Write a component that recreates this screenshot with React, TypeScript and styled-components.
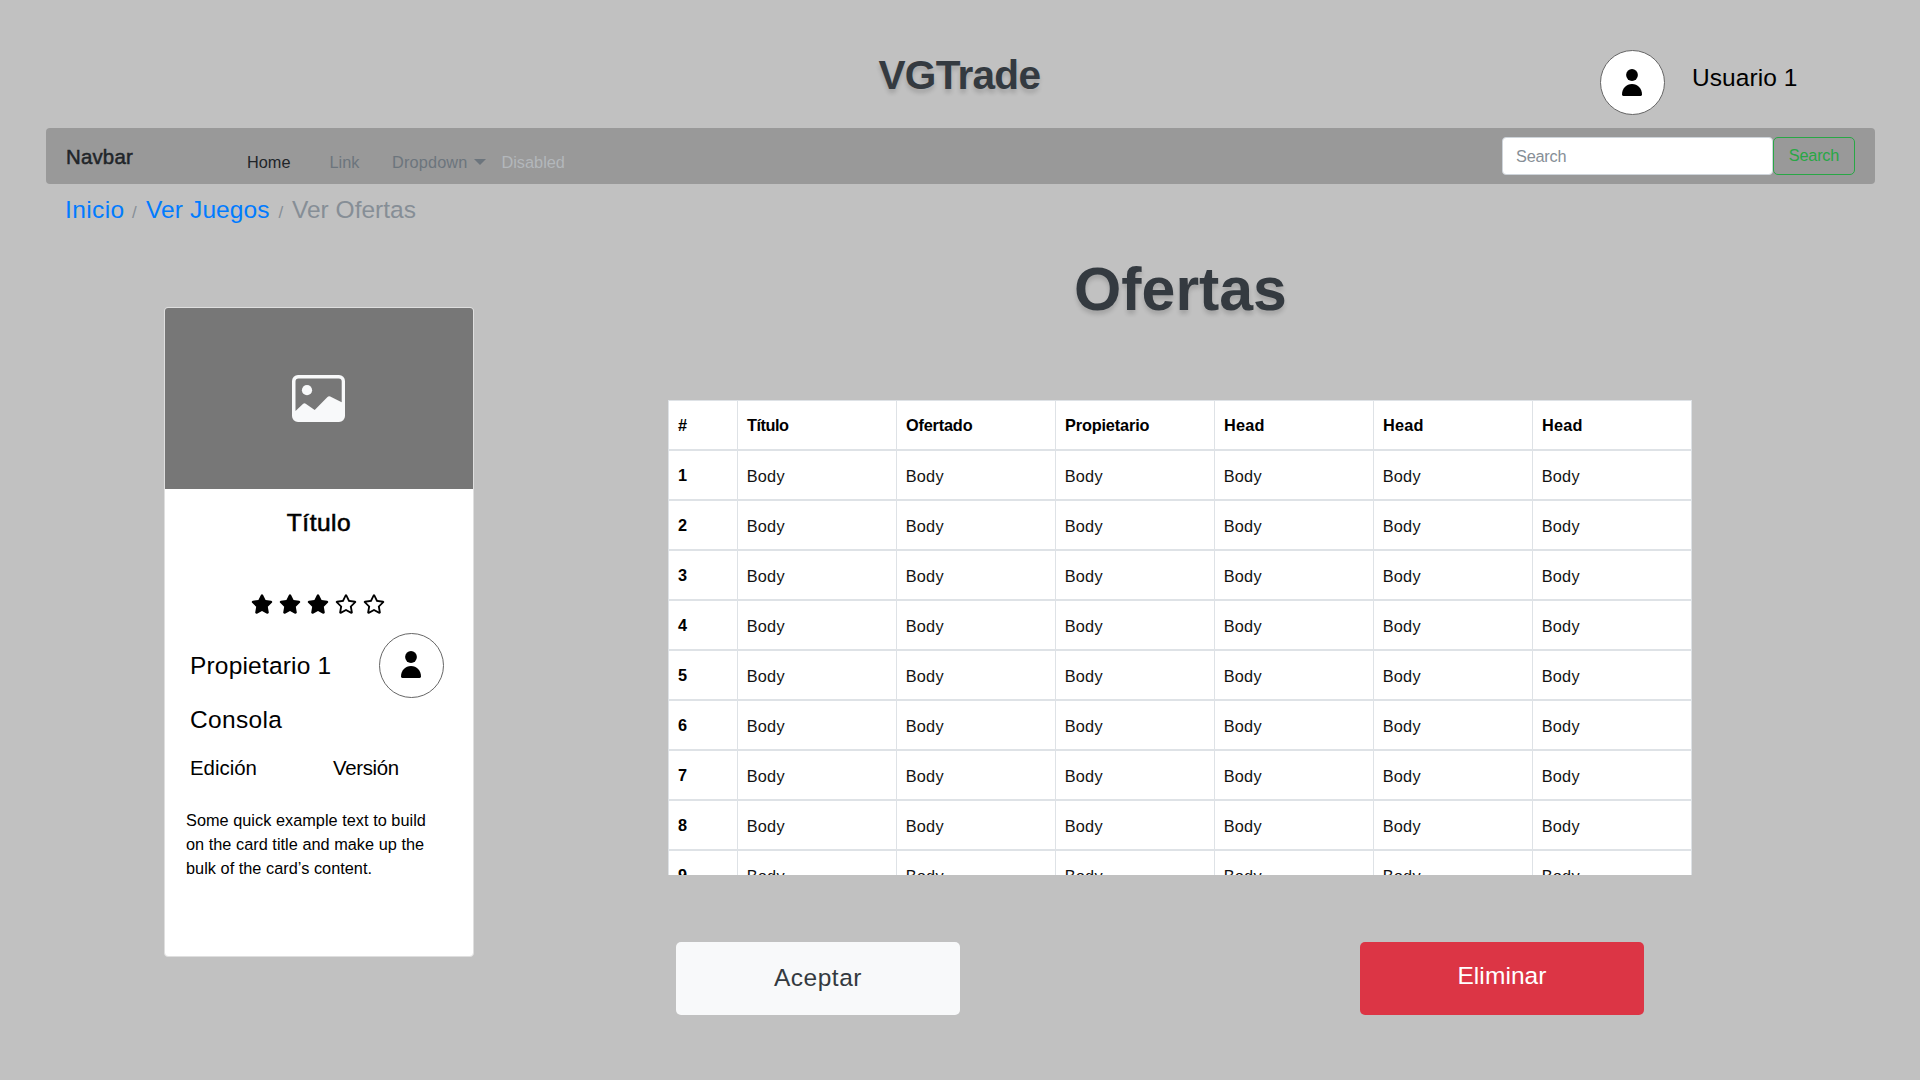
import React from "react";
import styled, { createGlobalStyle } from "styled-components";
import { FaStar, FaRegStar } from "react-icons/fa";

const GlobalStyle = createGlobalStyle`
  *, *::before, *::after { box-sizing: border-box; }
  html, body { margin: 0; padding: 0; }
  body {
    background: #c1c1c1;
    color: #000;
    font-family: "Liberation Sans", Arial, sans-serif;
    font-size: 16.3px;
    line-height: 24px;
  }
  h1, h2, h3, p { margin: 0; }
`;

const Page = styled.div`
  width: 1920px;
  height: 1080px;
  overflow: hidden;
  background: #c1c1c1;
`;

const Header = styled.header`
  display: grid;
  grid-template-columns: 878.5px 721.5px 1fr;
  height: 128px;
`;

const SiteTitle = styled.h1`
  grid-column: 2;
  padding-top: 51px;
  color: #343a40;
  font-size: 40.6px;
  line-height: 48px;
  font-weight: 700;
  letter-spacing: -0.74px;
  text-shadow: 0 4px 4px rgba(0, 0, 0, 0.15);
`;

const UserBlock = styled.div`
  display: flex;
  align-items: flex-start;
  gap: 27px;
  padding-top: 50px;
`;

const LargeText = styled.span<{ $spacing?: number }>`
  font-size: 24.5px;
  line-height: 30px;
  letter-spacing: ${(p) => p.$spacing ?? 0}px;
`;

const UserName = styled(LargeText)`
  padding-top: 12.5px;
`;

const Avatar = styled.div<{ $lift?: number }>`
  display: flex;
  align-items: center;
  justify-content: center;
  flex: none;
  width: 65px;
  height: 65px;
  padding: 0 1px ${(p) => p.$lift ?? 0}px 0;
  border: 1px solid #666;
  border-radius: 50%;
  background: #fff;
`;

const Navbar = styled.nav`
  display: flex;
  align-items: flex-start;
  height: 56px;
  margin: 0 45px 0 46px;
  padding: 0 20px 0 20px;
  border-radius: 4px;
  background: #999;
`;

const Brand = styled.span`
  width: 181px;
  padding-top: 17px;
  color: #212529;
  font-size: 20.4px;
  letter-spacing: 0.2px;
  -webkit-text-stroke: 0.5px #212529;
`;

const NavList = styled.div`
  display: grid;
  grid-template-columns: 82.5px 62.5px 109.5px auto;
  flex: 1;
  padding-top: 22px;
`;

const NavLink = styled.a<{ $tone: string }>`
  display: flex;
  align-items: flex-start;
  gap: 6px;
  color: ${(p) => p.$tone};
`;

const DropLabel = styled.span`
  letter-spacing: 0.16px;
`;

const Caret = styled.span`
  margin-top: 9px;
  border: 6px solid transparent;
  border-top-color: currentColor;
  border-bottom: 0;
`;

const SearchForm = styled.div`
  display: flex;
  padding-top: 9px;
  letter-spacing: -0.22px;
`;

const SearchField = styled.div`
  width: 271px;
  height: 38px;
  padding: 6px 13px;
  border: 1px solid #ced4da;
  border-radius: 4px;
  background: #fff;
  color: #868e96;
`;

const SearchButton = styled.div`
  width: 82px;
  height: 38px;
  padding-top: 5px;
  border: 1px solid #28a745;
  border-radius: 5px;
  color: #28a745;
  text-align: center;
`;

const Breadcrumb = styled.div`
  display: grid;
  grid-template-columns: 67px 14px 132.5px 13.5px auto;
  align-items: baseline;
  height: 50px;
  padding: 7.5px 0 0 65px;
`;

const Crumb = styled(LargeText)<{ $current?: boolean }>`
  line-height: 36px;
  color: ${(p) => (p.$current ? "#868e96" : "#007bff")};
`;

const Slash = styled.span`
  color: #868e96;
  font-size: 17px;
`;

const Main = styled.main`
  display: flex;
  align-items: flex-start;
  gap: 194px;
  padding-left: 164px;
`;

const Card = styled.section`
  width: 310px;
  height: 650px;
  margin-top: 73px;
  border: 1px solid #dfdfdf;
  border-radius: 4px;
  background: #fff;
  overflow: hidden;
`;

const CardImage = styled.div`
  display: flex;
  align-items: center;
  justify-content: center;
  height: 181px;
  padding-right: 2px;
  background: #777;
`;

const CardTitle = styled.h3`
  padding-top: 19px;
  font-size: 24.5px;
  line-height: 30px;
  font-weight: 400;
  letter-spacing: 0.5px;
  text-align: center;
  -webkit-text-stroke: 0.6px #000;
`;

const Rating = styled.div`
  display: flex;
  justify-content: center;
  gap: 6px;
  margin: 56px 0 19px;
  padding-right: 3px;

  svg {
    display: block;
    width: 22px;
    height: 20px;
  }
`;

const CardBody = styled.div`
  padding: 0 29px 0 25px;
`;

const OwnerRow = styled.div`
  display: flex;
  align-items: center;
  justify-content: space-between;
  height: 65px;
  margin-bottom: 6.5px;
`;

const EditionRow = styled.div`
  display: grid;
  grid-template-columns: 143px auto;
  padding-top: 21.5px;
  font-size: 20.4px;
`;

const EditionText = styled.span<{ $spacing?: number }>`
  letter-spacing: ${(p) => p.$spacing ?? 0}px;
`;

const Description = styled.p`
  width: 246px;
  margin: 28px 0 0 -4px;
  letter-spacing: 0.03px;
`;

const Offers = styled.section`
  width: 1024px;
`;

const OffersTitle = styled.h2`
  padding: 19px 0 0 1px;
  color: #343a40;
  font-size: 60.8px;
  line-height: 72px;
  font-weight: 700;
  text-align: center;
  text-shadow: 0 4px 4px rgba(0, 0, 0, 0.15);
`;

const TableView = styled.div`
  height: 475px;
  margin-top: 75px;
  overflow: hidden;
  border-right: 1px solid #dee2e6;
  background: #fff;
`;

const TableRow = styled.div`
  display: grid;
  grid-template-columns: 69px repeat(6, 159px);
  height: 50px;
`;

const Cell = styled.div<{ $strong?: boolean; $spacing?: number }>`
  padding: ${(p) => (p.$strong ? 12 : 13)}px 0 0 ${(p) => (p.$strong ? 9 : 8.7)}px;
  border: solid #dee2e6;
  border-width: 1px 0 1px 1px;
  color: ${(p) => (p.$strong ? "#000" : "#111")};
  font-weight: ${(p) => (p.$strong ? 700 : 400)};
  letter-spacing: ${(p) => p.$spacing ?? 0}px;
`;

const Actions = styled.div`
  display: flex;
  gap: 400px;
  padding: 67px 0 0 8px;
`;

const ActionButton = styled.div<{ $danger?: boolean }>`
  width: 284px;
  height: 73px;
  padding-top: ${(p) => (p.$danger ? 18.5 : 20.5)}px;
  border-radius: 5px;
  background: ${(p) => (p.$danger ? "#dc3545" : "#f8f9fa")};
  color: ${(p) => (p.$danger ? "#fff" : "#343a40")};
  text-align: center;
`;

const PersonIcon = () => (
  <svg width="20" height="27" viewBox="0 0 20 27">
    <circle cx="10" cy="6" r="5.9" />
    <path d="M0 25.6C0 19.2 4.4 15 10 15s10 4.2 10 10.6c0 .9-.5 1.4-1.4 1.4H1.4C.5 27 0 26.5 0 25.600Z" />
  </svg>
);

const PictureIcon = () => (
  <svg width="53" height="47" viewBox="0 0 53 47" fill="#f8f9fa">
    <path
      fillRule="evenodd"
      d="M6 0h41a6 6 0 0 1 6 6v35a6 6 0 0 1-6 6H6a6 6 0 0 1-6-6V6a6 6 0 0 1 6-6Zm.5 3.500a3 3 0 0 0-3 3V36l7.700-7.200q1.200-1 2.500-.1L22.700 35 35.500 21.900q1.200-1.200 2.700-.5L49.700 27.300V6.500a3 3 0 0 0-3-3Z"
    />
    <circle cx="15" cy="15.200" r="5.100" />
  </svg>
);

const columns = [
  { label: "Título", spacing: -0.45 },
  { label: "Ofertado", spacing: -0.18 },
  { label: "Propietario", spacing: -0.15 },
  { label: "Head", spacing: 0.2 },
  { label: "Head", spacing: 0.2 },
  { label: "Head", spacing: 0.2 },
];
const rows = [1, 2, 3, 4, 5, 6, 7, 8, 9];
const rating = 3;

export default function App() {
  return (
    <Page>
      <GlobalStyle />
      <Header>
        <SiteTitle>VGTrade</SiteTitle>
        <UserBlock>
          <Avatar>
            <PersonIcon />
          </Avatar>
          <UserName $spacing={0.08}>Usuario 1</UserName>
        </UserBlock>
      </Header>

      <Navbar>
        <Brand>Navbar</Brand>
        <NavList>
          <NavLink $tone="#212529">Home</NavLink>
          <NavLink $tone="#6c757d">Link</NavLink>
          <NavLink $tone="#6c757d">
            <DropLabel>Dropdown</DropLabel>
            <Caret />
          </NavLink>
          <NavLink $tone="#b3b7bb">Disabled</NavLink>
        </NavList>
        <SearchForm>
          <SearchField>Search</SearchField>
          <SearchButton>Search</SearchButton>
        </SearchForm>
      </Navbar>

      <Breadcrumb>
        <Crumb $spacing={0.4}>Inicio</Crumb>
        <Slash>/</Slash>
        <Crumb $spacing={0.11}>Ver Juegos</Crumb>
        <Slash>/</Slash>
        <Crumb $current>Ver Ofertas</Crumb>
      </Breadcrumb>

      <Main>
        <Card>
          <CardImage>
            <PictureIcon />
          </CardImage>
          <CardTitle>Título</CardTitle>
          <Rating>
            {[1, 2, 3, 4, 5].map((n) => (n <= rating ? <FaStar key={n} /> : <FaRegStar key={n} />))}
          </Rating>
          <CardBody>
            <OwnerRow>
              <LargeText $spacing={0.18}>Propietario 1</LargeText>
              <Avatar $lift={2}>
                <PersonIcon />
              </Avatar>
            </OwnerRow>
            <LargeText as="p" $spacing={0.35}>Consola</LargeText>
            <EditionRow>
              <EditionText>Edición</EditionText>
              <EditionText $spacing={-0.3}>Versión</EditionText>
            </EditionRow>
            <Description>
              Some quick example text to build on the card title and make up the bulk of the card’s content.
            </Description>
          </CardBody>
        </Card>

        <Offers>
          <OffersTitle>Ofertas</OffersTitle>
          <TableView>
            <TableRow>
              <Cell $strong>#</Cell>
              {columns.map((c, i) => (
                <Cell key={i} $strong $spacing={c.spacing}>
                  {c.label}
                </Cell>
              ))}
            </TableRow>
            {rows.map((n) => (
              <TableRow key={n}>
                <Cell $strong>{n}</Cell>
                {columns.map((_, i) => (
                  <Cell key={i} $spacing={0.25}>
                    Body
                  </Cell>
                ))}
              </TableRow>
            ))}
          </TableView>
          <Actions>
            <ActionButton>
              <LargeText $spacing={0.5}>Aceptar</LargeText>
            </ActionButton>
            <ActionButton $danger>
              <LargeText $spacing={0.08}>Eliminar</LargeText>
            </ActionButton>
          </Actions>
        </Offers>
      </Main>
    </Page>
  );
}
